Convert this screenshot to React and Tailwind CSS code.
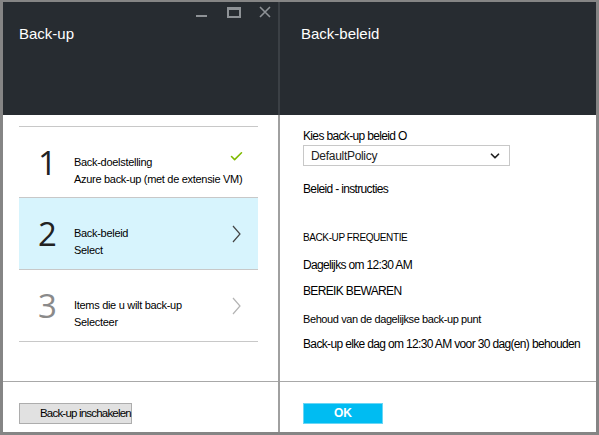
import { Check, ChevronDown } from 'lucide-react';

const font = { fontFamily: '"Liberation Sans", Arial, sans-serif' };

function Chevron({ color }) {
    return (
        <svg width="9" height="18" viewBox="0 0 9 18" fill="none" stroke={color} strokeWidth="1.2">
            <polyline points="1,1 8,9 1,17" />
        </svg>
    );
}

function Step({ num, title, sub, selected, muted, done, first }) {
    return (
        <div
            className={`relative flex h-[72px] border-b border-[#c8c8c8] ${first ? 'border-t' : ''} ${
                selected ? 'bg-[#d7f4fd]' : 'bg-white'
            }`}
        >
            <div
                className={`self-center w-[55px] pl-[19px] text-[33px] leading-none ${muted ? 'text-[#8a8a8a]' : 'text-[#222]'}`}
                style={{ fontFamily: '"Open Sans", "Liberation Sans", sans-serif' }}
            >
                {num}
            </div>
            <div className="pt-[27px] flex flex-col gap-[1px] text-[11px] leading-[16px] text-black tracking-[-0.3px] whitespace-nowrap">
                <span>{title}</span>
                <span>{sub}</span>
            </div>
            {done ? (
                <div className="absolute right-[14px] top-0 h-full flex items-center">
                    <Check size={15} strokeWidth={2.5} className="text-[#7fba00] -mt-[12px]" />
                </div>
            ) : (
                <div className="absolute right-[17px] top-0 h-full flex items-center">
                    <Chevron color={muted ? '#b4b4b4' : '#444'} />
                </div>
            )}
        </div>
    );
}

export default function App() {
    return (
        <div
            className="w-[599px] h-[435px] flex border-l-[3px] border-r-[3px] border-t-2 border-b-[3px] border-[#858585] bg-white"
            style={font}
        >
            {/* Left blade */}
            <div className="w-[275px] flex flex-col">
                <div className="h-[113px] bg-[#272c31] relative">
                    <div className="pt-[23px] pl-[16px] text-[15px] leading-[18px] text-white">Back-up</div>
                    <div className="absolute top-[4px] right-[7px] flex items-center text-[#8e9296]">
                        <svg width="12" height="12" viewBox="0 0 12 12">
                            <rect x="0" y="9" width="11" height="2" fill="currentColor" />
                        </svg>
                        <svg width="14" height="12" viewBox="0 0 14 12" fill="none" stroke="currentColor" className="ml-[19px]">
                            <rect x="1" y="2" width="12" height="9" strokeWidth="2" />
                            <rect x="1" y="2" width="12" height="2" fill="currentColor" strokeWidth="0" />
                        </svg>
                        <svg width="12" height="12" viewBox="0 0 12 12" stroke="currentColor" strokeWidth="1.6" className="ml-[18px]">
                            <path d="M1 1L11 11M11 1L1 11" />
                        </svg>
                    </div>
                </div>
                <div className="h-[266px] pt-[11px] pl-[16px] pr-[20px]">
                    <Step num="1" title="Back-doelstelling" sub="Azure back-up (met de extensie VM)" done first />
                    <Step num="2" title="Back-beleid" sub="Select" selected />
                    <Step num="3" title="Items die u wilt back-up" sub="Selecteer" muted />
                </div>
                <div className="flex-1 border-t border-[#a8a8a8] pt-[18px] pl-[16px]">
                    <button className="w-[113px] h-[21px] bg-[#e1e1e1] border border-[#adadad] text-[11.5px] text-black pl-[20px] text-left tracking-[-0.8px] whitespace-nowrap overflow-visible">
                        Back-up inschakelen
                    </button>
                </div>
            </div>

            <div className="w-[2px] bg-[#a0a0a0] flex flex-col">
                <div className="h-[113px] bg-[#3b4045]" />
            </div>

            {/* Right blade */}
            <div className="flex-1 flex flex-col">
                <div className="h-[113px] bg-[#272c31]">
                    <div className="pt-[23px] pl-[21px] text-[15px] leading-[18px] text-white">Back-beleid</div>
                </div>
                <div className="h-[266px] pl-[23px] pt-[13px] text-black tracking-[-0.65px] whitespace-nowrap">
                    <div className="text-[12px] leading-[16px]">Kies back-up beleid O</div>
                    <div className="mt-[1px] w-[207px] h-[21px] border border-[#c8c8c8] flex items-center justify-between px-[7px] text-[12px] text-[#222] tracking-[-0.3px]">
                        <span>DefaultPolicy</span>
                        <ChevronDown size={14} strokeWidth={3} className="text-[#222]" />
                    </div>
                    <div className="mt-[15px] text-[12px] leading-[16px]">Beleid - instructies</div>
                    <div className="mt-[33px] text-[10px] leading-[16px] tracking-[-0.4px]">BACK-UP FREQUENTIE</div>
                    <div className="mt-[11px] text-[12px] leading-[16px]">Dagelijks om 12:30 AM</div>
                    <div className="mt-[10px] text-[12px] leading-[16px]">BEREIK BEWAREN</div>
                    <div className="mt-[12px] text-[11px] leading-[16px] tracking-[-0.4px]">Behoud van de dagelijkse back-up punt</div>
                    <div className="mt-[9px] text-[12px] leading-[16px]">Back-up elke dag om 12:30 AM voor 30 dag(en) behouden</div>
                </div>
                <div className="flex-1 border-t border-[#a8a8a8] pt-[18px] pl-[23px]">
                    <button className="w-[80px] h-[21px] bg-[#00bcf2] border border-[#6ad6f5] text-white text-[12px] font-bold">
                        OK
                    </button>
                </div>
            </div>
        </div>
    );
}
